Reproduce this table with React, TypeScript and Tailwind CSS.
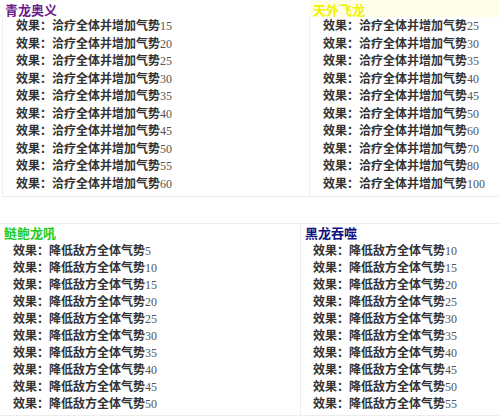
import React from "react";

const FONT = { fontFamily: '"Liberation Serif", "Noto Sans CJK SC", serif' };

interface Skill {
  name: string;
  color: string;
  effect: string;
  values: number[];
}

const heal = "洽疗全体并增加气势";
const lower = "降低敌方全体气势";

function Panel({
  skill,
  titleClass,
  listClass,
  rowClass,
  boxClass,
}: {
  skill: Skill;
  titleClass: string;
  listClass: string;
  rowClass: string;
  boxClass: string;
}) {
  return (
    <div className={boxClass}>
      <div className={titleClass} style={{ color: skill.color }}>
        {skill.name}
      </div>
      <div className={listClass}>
        {skill.values.map((v) => (
          <div key={v} className={rowClass}>
            效果：{skill.effect}
            <span className="text-[#555] font-normal">{v}</span>
          </div>
        ))}
      </div>
    </div>
  );
}

export default function App() {
  return (
    <div
      className="w-[499px] h-[418px] bg-white text-[12px] font-bold text-[#333] overflow-hidden"
      style={FONT}
    >
      <div className="flex">
        <Panel
          skill={{ name: "青龙奥义", color: "#6a1b8f", effect: heal, values: [15, 20, 25, 30, 35, 40, 45, 50, 55, 60] }}
          boxClass="w-[309px]"
          titleClass="pl-[5px] pt-[2px] h-[17px] text-[13px] leading-[17px]"
          listClass="ml-[2px] border-l border-b border-[#eee] pl-[13px] pt-[1px] pb-[3px]"
          rowClass="leading-[17.5px] whitespace-nowrap"
        />
        <Panel
          skill={{ name: "天外飞龙", color: "#f2f200", effect: heal, values: [25, 30, 35, 40, 45, 50, 60, 70, 80, 100] }}
          boxClass="flex-1"
          titleClass="pl-[4px] pt-[2px] h-[17px] text-[13px] leading-[17px] bg-[#fdfde8]"
          listClass="border-l border-b border-[#eee] pl-[13px] pt-[1px] pb-[3px]"
          rowClass="leading-[17.5px] whitespace-nowrap"
        />
      </div>
      <div className="h-[27px] border-b border-[#eee]" />
      <div className="flex">
        <Panel
          skill={{ name: "鲢鲍龙吼", color: "#22cc22", effect: lower, values: [5, 10, 15, 20, 25, 30, 35, 40, 45, 50] }}
          boxClass="w-[300px] border-b border-[#eee]"
          titleClass="pl-[4px] pt-[1px] h-[18px] text-[13px] leading-[18px]"
          listClass="pl-[13px] pt-[1px] pb-[2px]"
          rowClass="leading-[17px] whitespace-nowrap"
        />
        <Panel
          skill={{ name: "黑龙吞噬", color: "#101080", effect: lower, values: [10, 15, 20, 25, 30, 35, 40, 45, 50, 55] }}
          boxClass="flex-1 border-l border-b border-[#eee]"
          titleClass="pl-[4px] pt-[1px] h-[18px] text-[13px] leading-[18px]"
          listClass="pl-[12px] pt-[1px] pb-[2px]"
          rowClass="leading-[17px] whitespace-nowrap"
        />
      </div>
    </div>
  );
}
